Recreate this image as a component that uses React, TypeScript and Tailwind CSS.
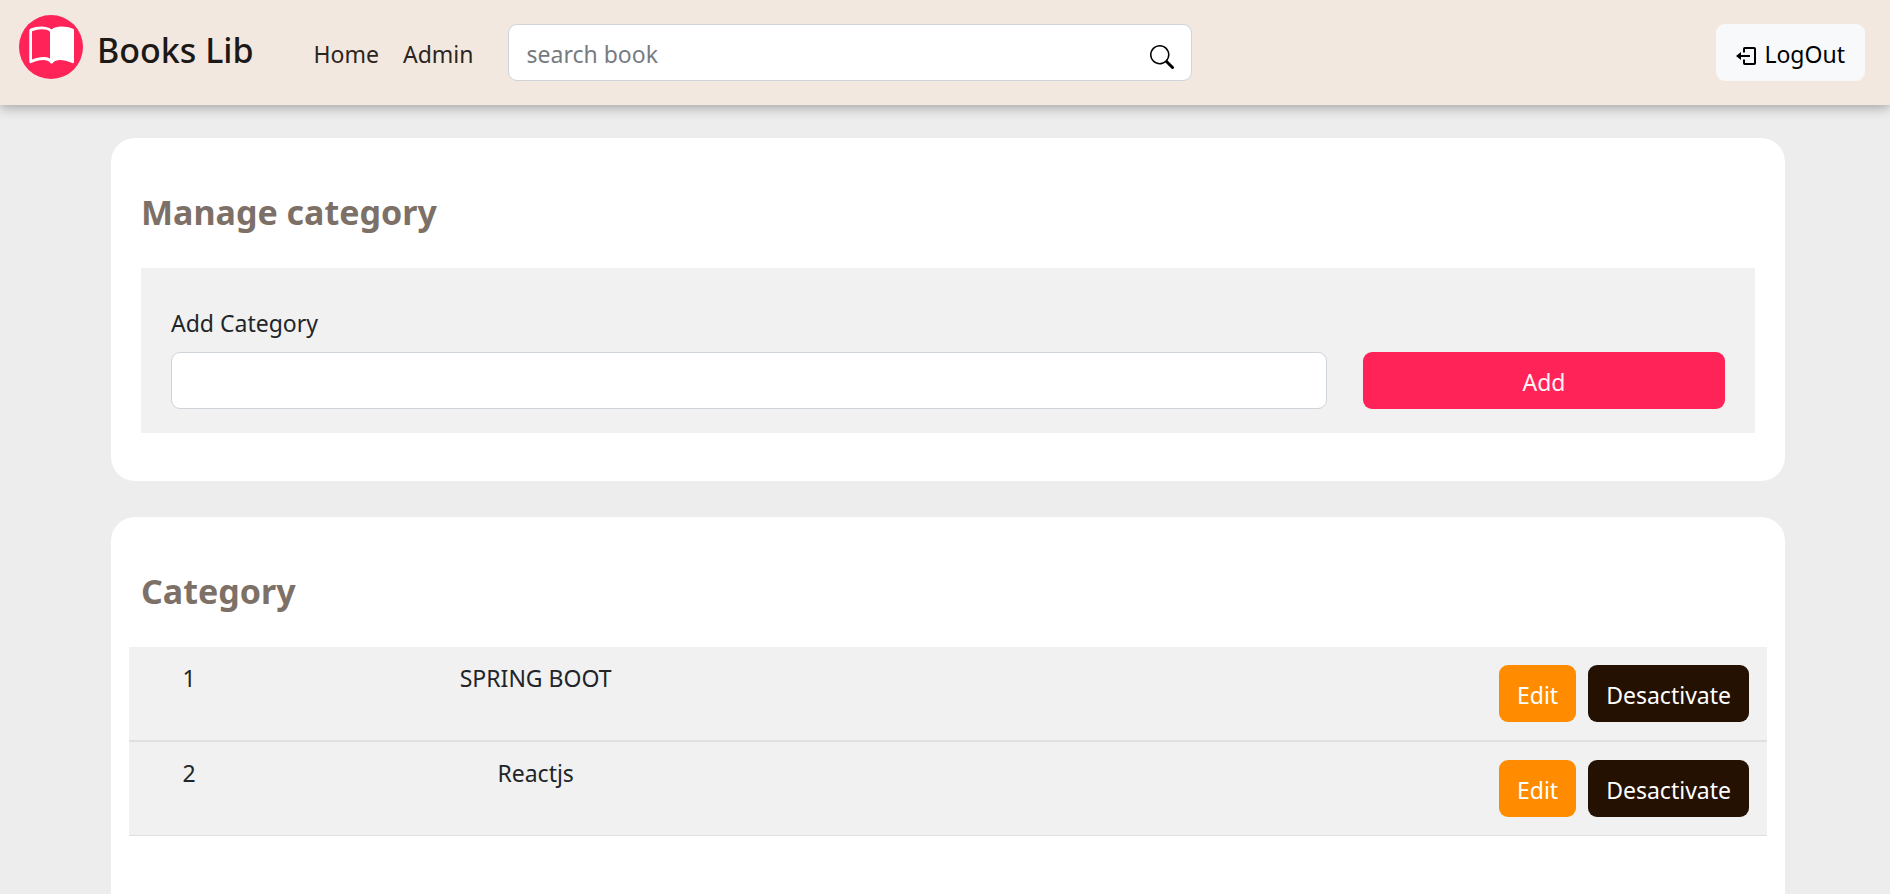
import { BsSearch } from "react-icons/bs";

const categories = [
  { id: 1, name: "SPRING BOOT" },
  { id: 2, name: "Reactjs" },
];

function Logo() {
  return (
    <svg viewBox="0 0 64 64" className="size-16" aria-hidden="true">
      <circle cx="32" cy="32" r="32" fill="#ff2358" />
      <path
        d="M10.300 15.200Q10.300 14.200 11.300 13.800C18 11.200 27 10.200 32.500 14.400C38 10.200 47 11.200 54 13.800Q55 14.200 55 15.200V46.800Q55 48.800 53.200 48C45 44.800 37.500 43.500 33.800 48Q32.600 49.400 31.400 48C27.800 43.500 20.300 44.800 12.100 48Q10.300 48.800 10.300 46.800Z"
        fill="#fff"
      />
      <path d="M13 16.300C19 14 27 13 31 16.700V43.600C26.500 41 19 42 13 44.400Z" fill="#ff2358" />
    </svg>
  );
}

function LogoutIcon() {
  return (
    <svg viewBox="0 0 20 18" className="mt-1 h-[18px] w-5" fill="none" stroke="#000" strokeWidth="2" aria-hidden="true">
      <path d="M8 5.500V1.8Q8 1 8.800 1H18.200Q19 1 19 1.800V16.200Q19 17 18.200 17H8.800Q8 17 8 16.200V12.500" />
      <path d="M3 9H14" />
      <path d="M0 9L5 5V13Z" fill="#000" stroke="none" />
    </svg>
  );
}

function Header() {
  return (
    <header className="flex h-[105px] items-start bg-[#f3e8df] pl-[19px] pr-[25px] shadow-[0_2px_12px_rgba(0,0,0,0.35)]">
      <a href="#" className="mt-[15px] flex items-start gap-[14px]">
        <Logo />
        <span className="pt-2 text-[34px] font-medium leading-[54px] text-[#1c1917]">Books Lib</span>
      </a>
      <nav className="ml-[60px] mt-9 flex gap-6 leading-9 text-[#2b2521]">
        <a href="#">Home</a>
        <a href="#">Admin</a>
      </nav>
      <form className="relative ml-[34px] mt-6 w-[684px]">
        <input
          type="search"
          aria-label="search book"
          placeholder="search book"
          className="h-[57px] w-full rounded-[9px] border border-[#ced4da] bg-white px-[18px] pt-0.5 placeholder:text-[#777b7f]"
        />
        <button type="button" aria-label="Search" className="absolute right-[18px] top-[21px] text-black">
          <BsSearch className="size-6" />
        </button>
      </form>
      <button className="ml-auto mt-6 flex h-[57px] items-center gap-2 rounded-[9px] bg-[#f8f9fa] px-5 pt-0.5 text-black">
        <LogoutIcon />
        LogOut
      </button>
    </header>
  );
}

export default function App() {
  return (
    <div className="flex min-h-screen flex-col bg-[#ededed] font-['Noto_Sans',sans-serif] text-[23px] leading-9 text-[#212529]">
      <Header />
      <main className="ml-[111px] mr-[105px] mt-[33px] flex grow flex-col gap-9">
        <section className="rounded-[24px] bg-white px-[30px] pb-12 pt-[53px]">
          <h2 className="text-[34px] font-bold leading-[43px] text-[#7d7067]">Manage category</h2>
          <form className="mt-[34px] bg-[#f1f1f1] px-[30px] pb-6 pt-[37px]">
            <label htmlFor="category">Add Category</label>
            <div className="mt-[11px] flex gap-9">
              <input
                id="category"
                className="h-[57px] min-w-0 grow rounded-[9px] border border-[#ced4da] bg-white px-[18px]"
              />
              <button type="button" className="h-[57px] w-[362px] rounded-[9px] bg-[#ff2358] pt-0.5 text-[#fff4f2]">
                Add
              </button>
            </div>
          </form>
        </section>
        <section className="grow rounded-t-[24px] bg-white px-[18px] pb-12 pt-[53px]">
          <h2 className="px-3 text-[34px] font-bold leading-[43px] text-[#7d7067]">Category</h2>
          <table className="mt-[34px] w-full table-fixed border-separate border-spacing-0 bg-[#f1f1f1]">
            <tbody>
              {categories.map((category) => (
                <tr key={category.id} className="group align-top">
                  <td className="w-[120px] border-b border-[#dee0e2] px-3 pt-[13px] text-center group-last:border-t">{category.id}</td>
                  <td className="w-[35%] border-b border-[#dee0e2] px-3 pt-[13px] text-center group-last:border-t">{category.name}</td>
                  <td className="border-b border-[#dee0e2] p-[18px] group-last:border-t">
                    <div className="flex justify-end gap-3 text-white">
                      <button className="h-[57px] rounded-[9px] bg-[#ff8c00] px-[18px] pt-0.5">Edit</button>
                      <button className="h-[57px] rounded-[9px] bg-[#241102] px-[18px] pt-0.5">Desactivate</button>
                    </div>
                  </td>
                </tr>
              ))}
            </tbody>
          </table>
        </section>
      </main>
    </div>
  );
}
